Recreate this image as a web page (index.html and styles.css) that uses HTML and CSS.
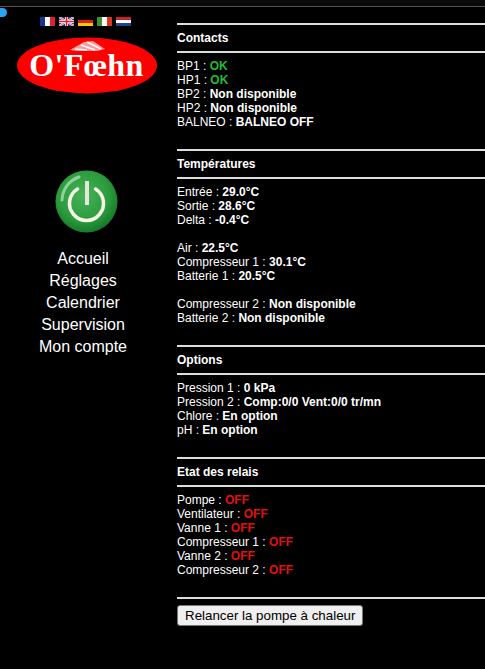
FILE: index.html
```html
<!DOCTYPE html>
<html lang="fr">
<head>
    <meta charset="UTF-8">
    <meta name="viewport" content="width=device-width, initial-scale=1.0">
    <title>O'Foehn - Supervision</title>
    <link rel="stylesheet" href="styles.css">
</head>
<body>

<div class="top-line"></div>
<div class="status-dot"></div>

<div class="page">

    <!-- Colonne gauche -->
    <div class="sidebar">
        <div class="flags">
            <svg class="flag" viewBox="0 0 15 9"><rect width="5" height="9" fill="#16388f"/><rect x="5" width="5" height="9" fill="#fff"/><rect x="10" width="5" height="9" fill="#e0202c"/></svg>
            <svg class="flag" viewBox="0 0 15 9"><rect width="15" height="9" fill="#24398c"/><path d="M0 0L15 9M15 0L0 9" stroke="#fff" stroke-width="2"/><path d="M0 0L15 9M15 0L0 9" stroke="#d8203a" stroke-width=".7"/><path d="M7.500 0V9M0 4.500H15" stroke="#fff" stroke-width="3"/><path d="M7.500 0V9M0 4.500H15" stroke="#d8203a" stroke-width="1.600"/></svg>
            <svg class="flag" viewBox="0 0 15 9"><rect width="15" height="3" fill="#000"/><rect y="3" width="15" height="3" fill="#dd1c1c"/><rect y="6" width="15" height="3" fill="#f8c70c"/></svg>
            <svg class="flag" viewBox="0 0 15 9"><rect width="5" height="9" fill="#3f9230"/><rect x="5" width="5" height="9" fill="#fff"/><rect x="10" width="5" height="9" fill="#d8361f"/></svg>
            <svg class="flag" viewBox="0 0 15 9"><rect width="15" height="3" fill="#c8202f"/><rect y="3" width="15" height="3" fill="#fff"/><rect y="6" width="15" height="3" fill="#20418f"/></svg>
        </div>

        <svg class="logo" viewBox="0 0 141 57">
            <ellipse cx="70" cy="28.500" rx="70" ry="28" fill="#fe0000"/>
            <path d="M53 13L67 5L76 4L88 12L80 14L60 14Z" fill="#ff9a9a"/>
            <path d="M58 12L70 13M64 8L78 13M70 5L84 12" stroke="#fff" stroke-width="1.500"/>
            <text x="69.500" y="39" text-anchor="middle" class="logo-text">O'Fœhn</text>
        </svg>

        <svg class="power" viewBox="0 0 64 64">
            <defs>
                <radialGradient id="ball" cx="45%" cy="40%" r="60%">
                    <stop offset="0" stop-color="#46b356"/>
                    <stop offset="0.7" stop-color="#2a9a3c"/>
                    <stop offset="1" stop-color="#167a2a"/>
                </radialGradient>
            </defs>
            <circle cx="31.500" cy="31.500" r="31" fill="url(#ball)"/>
            <path d="M7 30A25 25 0 0 1 24 7" fill="none" stroke="#8fd19a" stroke-width="3" stroke-linecap="round"/>
            <path d="M22.500 19A17 17 0 1 0 40.500 19" fill="none" stroke="#f5f3e2" stroke-width="3.500" stroke-linecap="round"/>
            <rect x="30" y="11" width="4" height="24" fill="#e4e8dc"/>
        </svg>

        <nav class="menu">
            <a href="#">Accueil</a>
            <a href="#">Réglages</a>
            <a href="#">Calendrier</a>
            <a href="#">Supervision</a>
            <a href="#">Mon compte</a>
        </nav>
    </div>

    <!-- Colonne droite -->
    <div class="content">
        <div class="section">
            <h3>Contacts</h3>
            <p>BP1 : <b class="ok">OK</b></p>
            <p>HP1 : <b class="ok">OK</b></p>
            <p>BP2 : <b>Non disponible</b></p>
            <p>HP2 : <b>Non disponible</b></p>
            <p>BALNEO : <b>BALNEO OFF</b></p>
        </div>

        <div class="section">
            <h3>Températures</h3>
            <p>Entrée : <b>29.0°C</b></p>
            <p>Sortie : <b>28.6°C</b></p>
            <p>Delta : <b>-0.4°C</b></p>
            <p class="gap">Air : <b>22.5°C</b></p>
            <p>Compresseur 1 : <b>30.1°C</b></p>
            <p>Batterie 1 : <b>20.5°C</b></p>
            <p class="gap">Compresseur 2 : <b>Non disponible</b></p>
            <p>Batterie 2 : <b>Non disponible</b></p>
        </div>

        <div class="section">
            <h3>Options</h3>
            <p>Pression 1 : <b>0 kPa</b></p>
            <p>Pression 2 : <b>Comp:0/0 Vent:0/0 tr/mn</b></p>
            <p>Chlore : <b>En option</b></p>
            <p>pH : <b>En option</b></p>
        </div>

        <div class="section">
            <h3>Etat des relais</h3>
            <p>Pompe : <b class="off">OFF</b></p>
            <p>Ventilateur : <b class="off">OFF</b></p>
            <p>Vanne 1 : <b class="off">OFF</b></p>
            <p>Compresseur 1 : <b class="off">OFF</b></p>
            <p>Vanne 2 : <b class="off">OFF</b></p>
            <p>Compresseur 2 : <b class="off">OFF</b></p>
        </div>

        <div class="restart">
            <button type="button">Relancer la pompe à chaleur</button>
        </div>
    </div>

</div>

</body>
</html>
```

FILE: styles.css
```css
* {
    margin: 0;
    padding: 0;
    box-sizing: border-box;
}

body {
    font-family: 'Liberation Sans', Arial, sans-serif;
    background-color: #000;
    color: #fff;
    font-size: 12px;
    line-height: 14px;
    overflow: hidden;
}

.top-line {
    height: 7px;
    background-color: #0a0a0a;
    border-bottom: 1px solid #555;
}

.status-dot {
    position: absolute;
    top: 8px;
    left: 0;
    width: 7px;
    height: 9px;
    border-radius: 0 5px 5px 0;
    background-color: #2aa5f0;
}

.page {
    display: grid;
    grid-template-columns: 177px 1fr;
}

/* Colonne gauche */
.sidebar {
    width: 174px;
    display: flex;
    flex-direction: column;
    align-items: center;
    padding-top: 10px;
}

.flags {
    display: flex;
    gap: 4px;
    padding-right: 3px;
}

.flag {
    display: block;
    width: 15px;
    height: 9px;
}

.logo {
    display: block;
    width: 141px;
    height: 57px;
    margin-top: 11px;
}

.logo-text {
    font-family: 'Liberation Serif', serif;
    font-weight: bold;
    font-size: 32px;
    letter-spacing: 0.4px;
    fill: #fff;
}

.power {
    display: block;
    width: 64px;
    height: 64px;
    margin-top: 76px;
}

.menu {
    display: flex;
    flex-direction: column;
    align-items: center;
    margin-top: 14px;
    padding-right: 8px;
}

.menu a {
    color: #fff;
    text-decoration: none;
    font-size: 16px;
    line-height: 22px;
}

/* Sections */
.content {
    padding-top: 16px;
}

.section {
    padding-bottom: 20px;
}

.section h3 {
    font-size: 12px;
    line-height: 14px;
    border-top: 2px solid #ddd;
    border-bottom: 2px solid #ddd;
    padding: 6px 0;
    margin-bottom: 6px;
}

.gap {
    margin-top: 14px;
}

.ok {
    color: #22bb33;
}

.off {
    color: #e01010;
}

.restart {
    border-top: 2px solid #ddd;
    padding-top: 6px;
}

.restart button {
    display: block;
    font-family: 'Liberation Sans', Arial, sans-serif;
    font-size: 13.333px;
    height: 21px;
    padding: 0 7px;
    color: #000;
    background-color: #efefef;
    border: 1px solid #767676;
    border-radius: 3px;
}
```
